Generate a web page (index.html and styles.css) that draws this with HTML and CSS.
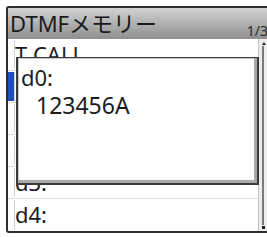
FILE: index.html
```html
<!DOCTYPE html>
<html lang="ja">
<head>
<meta charset="utf-8">
<link rel="stylesheet" href="styles.css">
</head>
<body>
<div class="screen">
  <div class="header">
    <span class="title">DTMFメモリー</span>
    <span class="page">1/3</span>
  </div>
  <div class="body">
    <div class="rows">
      <div class="row"><span class="mark"></span><span class="label">T CALL</span></div>
      <div class="row"><span class="mark sel"></span><span class="label">d0:</span></div>
      <div class="row"><span class="mark"></span><span class="label">d1:</span></div>
      <div class="row"><span class="mark"></span><span class="label">d2:</span></div>
      <div class="row"><span class="mark"></span><span class="label">d3:</span></div>
      <div class="row"><span class="mark"></span><span class="label">d4:</span></div>
    </div>
    <div class="scroll">
      <span class="arrow"></span>
      <span class="track"></span>
      <span class="end"></span>
    </div>
  </div>
  <div class="dialog">
    <div class="dlg-name">d0:</div>
    <div class="dlg-code">123456A</div>
  </div>
</div>
</body>
</html>
```

FILE: styles.css
```css
html, body {
  margin: 0;
  padding: 0;
  background: #ffffff;
  overflow: hidden;
}
body {
  width: 267px;
  height: 237px;
  font-family: "Noto Sans", "Noto Sans CJK JP", sans-serif;
  color: #1c1c1c;
}
.screen {
  position: relative;
  margin: 6px 0 0 6px;
  width: 264px;
  border: 2px solid #2e2e2e;
  border-right: none;
  border-radius: 3px 0 0 3px;
  background: #fff;
}
.header {
  height: 31px;
  display: flex;
  justify-content: space-between;
  align-items: flex-end;
  background: linear-gradient(to bottom, #d2d2d2 0%, #b4b4b4 45%, #8e8e8e 100%);
}
.title {
  font-size: 22px;
  line-height: 31px;
  padding-left: 2px;
  color: #1a1a1a;
  align-self: stretch;
}
.page {
  font-size: 14px;
  line-height: 16px;
  color: #2a2a2a;
  margin-right: 4px;
  margin-bottom: 0;
}
.body {
  display: flex;
}
.rows {
  width: 251px;
  display: flex;
  flex-direction: column;
}
.row {
  height: 32px;
  display: flex;
  align-items: stretch;
  box-sizing: border-box;
  border-bottom: 1px solid #dedede;
}
.row:last-child {
  border-bottom: none;
}
.mark {
  width: 6px;
  margin: 1px 0;
  border-right: 1px solid #d0d0d0;
}
.mark.sel {
  background: #1f4fb8;
}
.label {
  font-size: 22px;
  line-height: 31px;
  padding-left: 0px;
}
.scroll {
  width: 13px;
  display: flex;
  flex-direction: column;
  align-items: flex-start;
  background: #ececec;
  border-left: 1px solid #c4c4c4;
}
.arrow {
  width: 0;
  height: 0;
  margin: 3px 0 0 3px;
  border-left: 2px solid transparent;
  border-right: 2px solid transparent;
  border-bottom: 3px solid #222;
}
.track {
  flex: 1;
  width: 2px;
  margin: 1px 0 1px 3px;
  background: #7a7a7a;
}
.end {
  width: 3px;
  height: 3px;
  margin: 0 0 2px 3px;
  background: #222;
}
.dialog {
  position: absolute;
  left: 8px;
  top: 49px;
  width: 243px;
  height: 128px;
  box-sizing: border-box;
  border: 2px solid #3a3a3a;
  border-top-width: 1px;
  background: #fff;
  box-shadow: inset -3px -3px 0 #a9a9a9, inset 1px 1px 0 #c8c8c8;
  padding: 5px 0 0 3px;
}
.dlg-name, .dlg-code {
  font-size: 22px;
  line-height: 28px;
}
.dlg-code {
  padding-left: 15px;
  font-size: 23px;
}
```
